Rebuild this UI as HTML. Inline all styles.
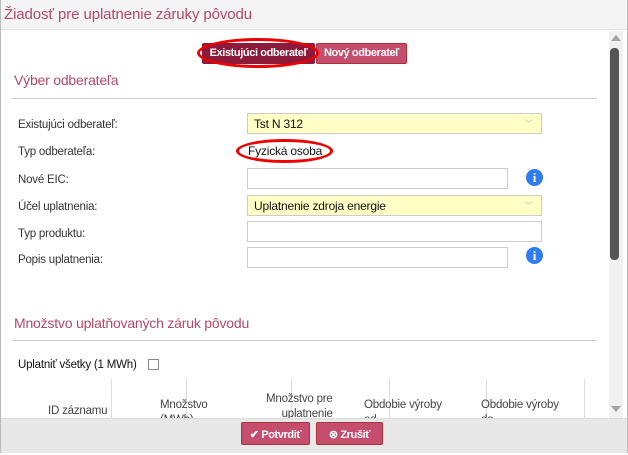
<!DOCTYPE html>
<html><head><meta charset="utf-8"><style>
*{box-sizing:border-box;margin:0;padding:0}
body{width:628px;height:455px;background:#fff;font-family:"Liberation Sans",Arial,sans-serif;font-size:12px;color:#333;position:relative;overflow:hidden}
.frame{position:absolute;left:0;top:0;width:628px;height:453px;border:1px solid #bbb;border-top:none}
.hdr{position:absolute;left:1px;top:0;width:626px;height:30px;background:#f4f4f4;border-bottom:1px solid #e3e3e3;color:#b04a68;font-size:15px;padding:6px 0 0 3px;letter-spacing:-0.1px}
.abs{position:absolute;white-space:nowrap}
.btn{position:absolute;color:#fff;font-size:11px;font-weight:bold;text-align:center;border-radius:2px;letter-spacing:-0.4px;white-space:nowrap}
.lbl{position:absolute;left:18px;font-size:11.5px;color:#333;letter-spacing:-0.2px}
.in{position:absolute;border:1px solid #ccc;background:#fff;height:21px}
.sel{background:#ffffc6;font-size:12px;color:#111;padding:3px 0 0 6px;letter-spacing:-0.2px}
.chev{position:absolute;right:8px;top:3px;color:#bbb;font-size:9px}
.info{position:absolute;width:17px;height:17px;border-radius:50%;background:#2f7cf0;color:#fff;font:bold 13px "Liberation Serif",serif;text-align:center;line-height:17px}
.sec{position:absolute;left:14px;color:#b04a68;font-size:14px;letter-spacing:-0.2px}
.hr{position:absolute;left:12px;width:585px;height:1px;background:#ccc}
.th{position:absolute;font-size:11.5px;color:#444;line-height:15px;letter-spacing:-0.2px;white-space:nowrap}
.vl{position:absolute;top:379px;width:1px;height:40px;background:#ddd}
</style></head><body>
<div class="frame"></div>
<div class="hdr">Žiadosť pre uplatnenie záruky pôvodu</div>
<div class="abs" style="left:609px;top:31px;width:14px;height:387px;background:#f1f1f1"></div>
<div class="abs" style="left:611px;top:35px;width:0;height:0;border-left:5px solid transparent;border-right:5px solid transparent;border-bottom:6px solid #a3a3a3"></div>
<div class="abs" style="left:610px;top:48px;width:9px;height:212px;background:#555;border-radius:4px"></div>
<div class="abs" style="left:611px;top:406px;width:0;height:0;border-left:5px solid transparent;border-right:5px solid transparent;border-top:6px solid #a3a3a3"></div>

<div class="btn" style="left:202px;top:43px;width:113px;height:21px;background:#8c1a3a;padding-top:4px">Existujúci odberateľ</div>
<div class="btn" style="left:316px;top:43px;width:91px;height:21px;background:#c54e6e;border:1px solid #a33;padding-top:3px">Nový odberateľ</div>
<div class="abs" style="left:197px;top:38px;width:122px;height:30px;border:3px solid #e00;border-radius:50%"></div>

<div class="sec" style="top:72px">Výber odberateľa</div>
<div class="hr" style="top:98px"></div>

<div class="lbl" style="top:119px">Existujúci odberateľ:</div>
<div class="in sel" style="left:247px;top:113px;width:295px">Tst N 312<span class="chev">﹀</span></div>
<div class="lbl" style="top:146px">Typ odberateľa:</div>
<div class="abs" style="left:248px;top:144px;font-size:12px;color:#111;letter-spacing:-0.2px">Fyzická osoba</div>
<div class="abs" style="left:236px;top:139px;width:97px;height:24px;border:3px solid #e00;border-radius:50%"></div>
<div class="lbl" style="top:174px">Nové EIC:</div>
<div class="in" style="left:247px;top:168px;width:261px"></div>
<div class="info" style="left:526px;top:169px">i</div>
<div class="lbl" style="top:201px">Účel uplatnenia:</div>
<div class="in sel" style="left:247px;top:195px;width:295px">Uplatnenie zdroja energie<span class="chev">﹀</span></div>
<div class="lbl" style="top:228px">Typ produktu:</div>
<div class="in" style="left:247px;top:221px;width:295px"></div>
<div class="lbl" style="top:254px">Popis uplatnenia:</div>
<div class="in" style="left:247px;top:247px;width:261px"></div>
<div class="info" style="left:526px;top:247px">i</div>

<div class="sec" style="top:315px">Množstvo uplatňovaných záruk pôvodu</div>
<div class="hr" style="top:340px"></div>
<div class="abs" style="left:18px;top:359px;font-size:11.5px;color:#111;letter-spacing:-0.2px">Uplatniť všetky (1 MWh)</div>
<div class="abs" style="left:148px;top:359px;width:11px;height:11px;border:1px solid #888"></div>

<div class="vl" style="left:111px"></div><div class="vl" style="left:186px"></div><div class="vl" style="left:291px"></div><div class="vl" style="left:389px"></div><div class="vl" style="left:486px"></div><div class="vl" style="left:584px"></div>
<div class="th" style="left:48px;top:404px">ID záznamu</div>
<div class="th" style="left:160px;top:398px">Množstvo<br>(MWh)</div>
<div class="th" style="left:266px;top:392px;text-align:right">Množstvo pre<br>uplatnenie</div>
<div class="th" style="left:364px;top:398px">Obdobie výroby<br>od</div>
<div class="th" style="left:481px;top:398px">Obdobie výroby<br>do</div>

<div class="abs" style="left:1px;top:418px;width:626px;height:35px;background:#e8e8e8;border-top:1px solid #ddd"></div>
<div class="btn" style="left:241px;top:422px;width:69px;height:23px;background:#c54e6e;border:1px solid #a33;padding-top:5px">✔ Potvrdiť</div>
<div class="btn" style="left:316px;top:422px;width:67px;height:23px;background:#c54e6e;border:1px solid #a33;padding-top:5px">⊗ Zrušiť</div>
</body></html>
